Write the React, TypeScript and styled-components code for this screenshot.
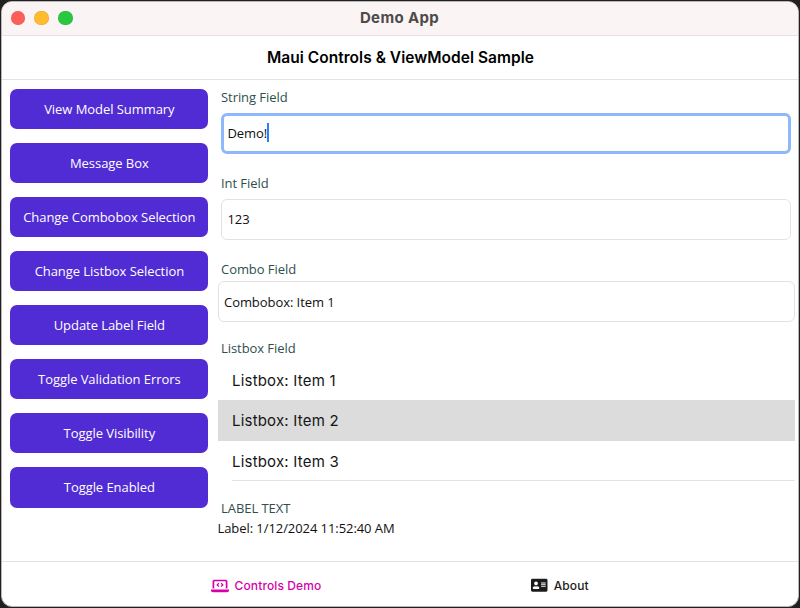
import React from "react";
import styled, { createGlobalStyle } from "styled-components";
import { FaAddressCard } from "react-icons/fa";

const GlobalStyle = createGlobalStyle`
  * { box-sizing: border-box; }
  body { margin: 0; background: #211f20; }
`;

const sans = `"Open Sans", "Noto Sans", sans-serif`;
const system = `Inter, "Liberation Sans", sans-serif`;

const Desktop = styled.div`
  width: 800px;
  height: 608px;
  padding: 1px;
  background: #211f20;
  overflow: hidden;
`;

const Window = styled.div`
  display: flex;
  flex-direction: column;
  width: 798px;
  height: 606px;
  border: 1px solid #b9b7b7;
  border-radius: 11px;
  background: #fff;
  overflow: hidden;
`;

const TitleBar = styled.header`
  display: grid;
  grid-template-columns: 1fr auto 1fr;
  align-items: center;
  height: 34px;
  flex: none;
  padding: 0 9.5px 1px 8.5px;
  background: #fbf4f4;
  border-bottom: 1px solid #e6e1e1;
`;

const Lights = styled.div`
  display: flex;
  gap: 9.3px;
`;

const Light = styled.span<{ $color: string }>`
  width: 14.5px;
  height: 14.5px;
  border-radius: 50%;
  background: ${(p) => p.$color};
  box-shadow: inset 0 0 0 0.5px rgba(0, 0, 0, 0.12);
`;

const WindowTitle = styled.h1`
  margin: 0;
  font: 700 15px/20px ${system};
  letter-spacing: 0.35px;
  color: #4d4a4a;
`;

const NavBar = styled.div`
  display: flex;
  align-items: center;
  justify-content: center;
  height: 44px;
  flex: none;
  padding-left: 1px;
  border-bottom: 1px solid #e3e3e3;
`;

const PageTitle = styled.h2`
  margin: 0;
  font: 600 15.5px/20px ${system};
  letter-spacing: 0.03px;
  color: #000;
`;

const Content = styled.main`
  display: flex;
  flex: 1;
  min-height: 0;
`;

const Actions = styled.nav`
  display: flex;
  flex-direction: column;
  gap: 13.94px;
  width: 207px;
  padding: 9.2px 0.6px 0 8.3px;
  flex: none;
`;

const ActionButton = styled.button`
  height: 40.1px;
  flex: none;
  padding: 0;
  border: 0;
  border-radius: 7px;
  background: #512bd4;
  color: #fff;
  font: 400 13px/18px ${sans};
  letter-spacing: -0.06px;
`;

const Form = styled.section`
  display: flex;
  flex-direction: column;
  flex: 1;
  min-width: 0;
  padding: 8px 3px 0 8.5px;
`;

const Label = styled.label<{ $gap?: number }>`
  height: 18px;
  flex: none;
  margin: 0 0 ${(p) => p.$gap ?? 0}px 3.5px;
  font: 400 13px/18px ${sans};
  letter-spacing: -0.06px;
  color: #2f4f4f;
`;

const Field = styled.div<{ $focused?: boolean; $wide?: boolean; $gap: number }>`
  display: flex;
  align-items: center;
  height: 41px;
  flex: none;
  margin: 0 ${(p) => (p.$wide ? "0" : "4px")} ${(p) => p.$gap}px ${(p) => (p.$wide ? "0" : "3.5px")};
  padding: 0 0 ${(p) => (p.$wide ? 0 : 2)}px ${(p) => (p.$focused ? 3.5 : 5.5)}px;
  border: ${(p) => (p.$focused ? "3px solid #8db8fb" : "1px solid #e2e2e2")};
  border-radius: 6px;
  font: 400 13px/18px ${sans};
  letter-spacing: -0.06px;
  color: #111;
`;

const Caret = styled.span`
  width: 2px;
  height: 19px;
  margin-left: -0.5px;
  background: #2a80fb;
`;

const List = styled.ul`
  margin: 0 0 17px;
  padding: 0;
  list-style: none;
`;

const Item = styled.li<{ $selected?: boolean }>`
  height: 40.3px;
  padding: 1px 0 0 14.5px;
  font: 400 15px/40px ${system};
  letter-spacing: 0.2px;
  color: #151515;
  background: ${(p) => (p.$selected ? "#dcdcdc" : "transparent")};
`;

const Divider = styled.li`
  height: 1px;
  margin: -0.5px 0 0.5px 14px;
  background: #e2e2e2;
`;

const Value = styled.div`
  margin-top: 2px;
  font: 400 13px/18px ${sans};
  letter-spacing: -0.07px;
  color: #111;
`;

const Tabs = styled.footer`
  display: grid;
  grid-template-columns: 1fr 1fr;
  padding: 0 91px 0 117px;
  height: 45px;
  flex: none;
  border-top: 1px solid #e0e0e0;
`;

const Tab = styled.a<{ $active?: boolean }>`
  display: flex;
  align-items: center;
  justify-content: center;
  gap: 6px;
  padding-top: 3px;
  font: 450 12px/18px ${system};
  letter-spacing: 0.12px;
  color: ${(p) => (p.$active ? "#d600aa" : "#1c1c1c")};
`;

const TabText = styled.span`
  padding-top: 1px;
`;

const LaptopCodeIcon = () => (
  <svg width="18" height="14" viewBox="0 0 18 14" fill="none" stroke="currentColor">
    <path d="M2.4 9.4V2.3a.8.8 0 0 1 .8-.8h11.6a.8.8 0 0 1 .8.8v7.1" strokeWidth="1.7" />
    <path d="M0 10.6h18v.6a2 2 0 0 1-2 2H2a2 2 0 0 1-2-2z" fill="currentColor" stroke="none" />
    <path d="M7.9 4.2 6.2 5.9l1.7 1.7M10.1 4.2l1.7 1.7-1.7 1.7" strokeWidth="1.3" />
  </svg>
);

const actions = [
  "View Model Summary",
  "Message Box",
  "Change Combobox Selection",
  "Change Listbox Selection",
  "Update Label Field",
  "Toggle Validation Errors",
  "Toggle Visibility",
  "Toggle Enabled",
];

export default function App() {
  return (
    <Desktop>
      <GlobalStyle />
      <Window>
        <TitleBar>
          <Lights>
            <Light $color="#ff5f57" />
            <Light $color="#febc2e" />
            <Light $color="#28c840" />
          </Lights>
          <WindowTitle>Demo App</WindowTitle>
        </TitleBar>
        <NavBar>
          <PageTitle>Maui Controls &amp; ViewModel Sample</PageTitle>
        </NavBar>
        <Content>
          <Actions>
            {actions.map((name) => (
              <ActionButton key={name}>{name}</ActionButton>
            ))}
          </Actions>
          <Form>
            <Label $gap={7}>String Field</Label>
            <Field $focused $gap={20}>
              Demo!
              <Caret />
            </Field>
            <Label $gap={7}>Int Field</Label>
            <Field $gap={20}>123</Field>
            <Label $gap={3}>Combo Field</Label>
            <Field $wide $gap={17}>Combobox: Item 1</Field>
            <Label $gap={3}>Listbox Field</Label>
            <List>
              <Item>Listbox: Item 1</Item>
              <Item $selected>Listbox: Item 2</Item>
              <Item>Listbox: Item 3</Item>
              <Divider />
            </List>
            <Label>LABEL TEXT</Label>
            <Value>Label: 1/12/2024 11:52:40 AM</Value>
          </Form>
        </Content>
        <Tabs>
          <Tab $active>
            <LaptopCodeIcon />
            <TabText>Controls Demo</TabText>
          </Tab>
          <Tab>
            <FaAddressCard size={16.5} />
            <TabText>About</TabText>
          </Tab>
        </Tabs>
      </Window>
    </Desktop>
  );
}
